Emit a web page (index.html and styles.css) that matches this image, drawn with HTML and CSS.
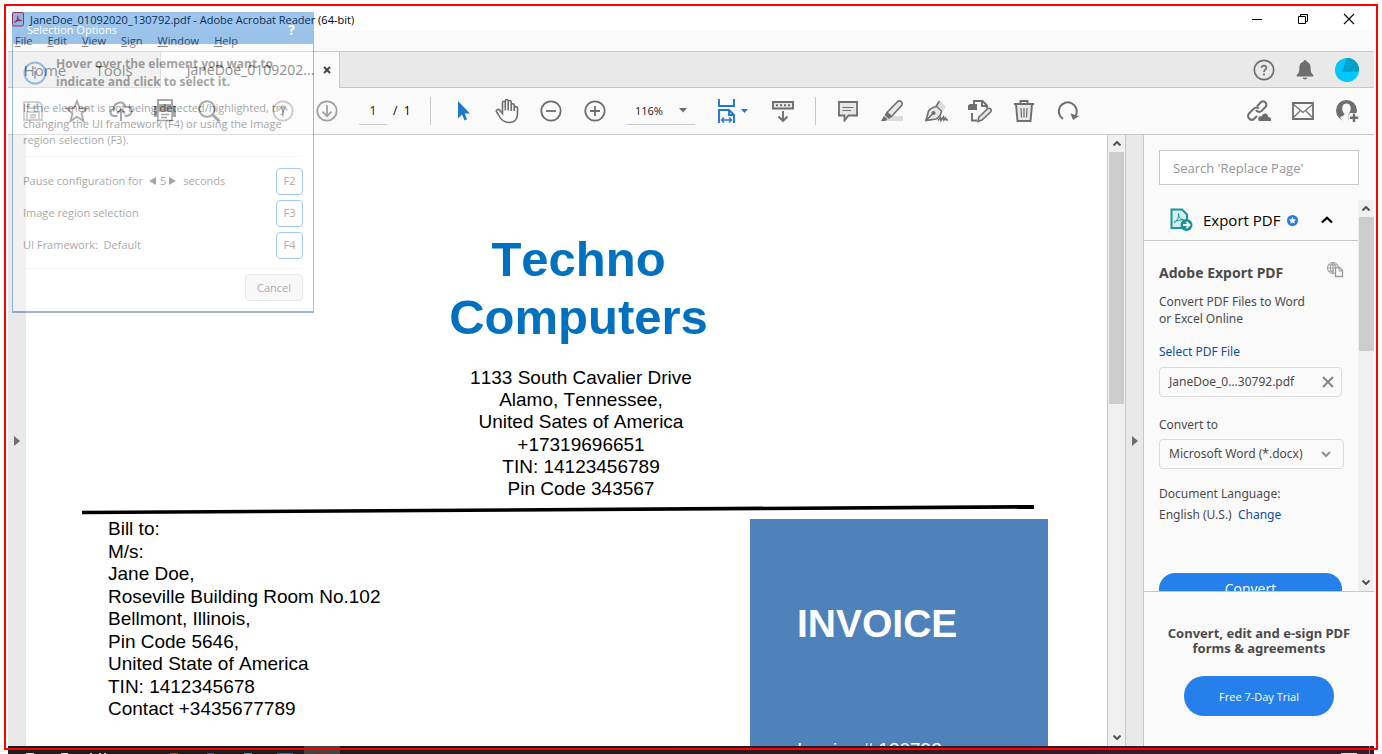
FILE: index.html
```html
<!DOCTYPE html>
<html lang="en">
<head>
<meta charset="utf-8">
<title>JaneDoe_01092020_130792.pdf - Adobe Acrobat Reader (64-bit)</title>
<link rel="stylesheet" href="styles.css">
</head>
<body>
<div class="screen">
  <header class="titlebar">
    <svg class="app-icon" width="12" height="15" viewBox="0 0 12 15"><rect x="0.5" y="0.5" width="11" height="13.5" rx="1.5" fill="#f6dfe2" stroke="#e0172c"/><path d="M2.500 10.500C5 9 6 6 5.700 3.800 5.300 6.500 7.500 8.800 9.700 8.600 7 8 4 9 2.500 10.500Z" fill="none" stroke="#e0132b" stroke-width="1.100"/></svg>
    <h1 class="title">JaneDoe_01092020_130792.pdf - Adobe Acrobat Reader (64-bit)</h1>
    <div class="window-buttons">
      <button aria-label="Minimize"><svg width="12" height="12" viewBox="0 0 12 12"><path d="M1 6.500H11" stroke="#000"/></svg></button>
      <button aria-label="Restore"><svg width="12" height="12" viewBox="0 0 12 12"><path d="M1.500 3.500H8.500V10.500H1.500ZM3.500 3.500V1.500H10.500V8.500H8.500" fill="none" stroke="#000"/></svg></button>
      <button aria-label="Close"><svg width="12" height="12" viewBox="0 0 12 12"><path d="M1 1L11 11M11 1L1 11" stroke="#000" stroke-width="1.100"/></svg></button>
    </div>
  </header>

  <nav class="menubar">
    <button><u>F</u>ile</button><button><u>E</u>dit</button><button><u>V</u>iew</button><button><u>S</u>ign</button><button><u>W</u>indow</button><button><u>H</u>elp</button>
  </nav>

  <div class="tabbar">
    <button class="tab tab-home">Home</button>
    <button class="tab tab-tools">Tools</button>
    <div class="tab-active">
      <button class="tab">JaneDoe_0109202...</button>
      <button class="tab-close" aria-label="Close tab"><svg width="8" height="8" viewBox="0 0 8 8"><path d="M1 1L7 7M7 1L1 7" stroke="#444" stroke-width="2"/></svg></button>
    </div>
    <div class="account">
      <button aria-label="Help"><svg width="22" height="22" viewBox="0 0 22 22" fill="none" stroke="#6e6e6e"><circle cx="11" cy="11" r="9.700" stroke-width="1.700"/><path d="M8.500 8.800C8.500 5.800 13.500 5.900 13.300 8.900 13.200 10.700 11 10.700 11 13" stroke-width="1.700"/><path d="M11 14.500V16.300" stroke-width="2"/></svg></button>
      <button aria-label="Notifications"><svg width="20" height="22" viewBox="0 0 20 22" fill="#6e6e6e"><path d="M10 1C11.200 1 11.600 2 11.500 2.800 14.800 3.600 15.600 6 15.600 9 15.600 13 16.500 14.500 18.300 16V17.500H1.700V16C3.500 14.500 4.400 13 4.400 9 4.400 6 5.200 3.600 8.500 2.800 8.400 2 8.800 1 10 1ZM7.500 18.700H12.500C12 21 8 21 7.500 18.700Z"/></svg></button>
      <button aria-label="Profile"><svg width="24" height="24" viewBox="0 0 24 24"><circle cx="12" cy="12" r="12" fill="#00c8ff"/><path d="M12 0A12 12 0 0 1 24 13.500L7 14Z" fill="#00a0c8"/></svg></button>
    </div>
  </div>

  <div class="toolbar">
    <button class="tool" aria-label="Save"><svg width="22" height="22" viewBox="0 0 22 22" fill="none" stroke="#b0b0b0" stroke-width="1.800"><path d="M2 2H17L20 5V20H2ZM6 2V8H15V2M5 20V12H17V20M8 15H14M8 17.500H14"/></svg></button>
    <button class="tool" aria-label="Star"><svg width="24" height="24" viewBox="0 0 24 24" fill="none" stroke="#6e6e6e" stroke-width="1.700"><path d="M12 2L14.800 9.200 22.300 9.600 16.500 14.400 18.500 22 12 17.700 5.500 22 7.500 14.400 1.700 9.600 9.200 9.200Z"/></svg></button>
    <button class="tool" aria-label="Upload"><svg width="24" height="24" viewBox="0 0 24 24" fill="none" stroke="#6e6e6e" stroke-width="2"><path d="M8.500 17H5C0.500 16.500 0.500 10.500 5 10 5 3 14.500 1 16.500 8 21 7 23.500 9.500 22.500 13 22 16 20 17 15.500 17M12 22V11M8 14.500L12 10.500 16 14.500"/></svg></button>
    <button class="tool" aria-label="Print"><svg width="24" height="24" viewBox="0 0 24 24"><path d="M5 1H19V6H5Z" fill="none" stroke="#6e6e6e" stroke-width="2"/><path d="M1 7H23V18H19V12H5V18H1Z" fill="#6e6e6e"/><path d="M5 12H19V21.500H5ZM8 15.500H16M8 18.500H14" fill="none" stroke="#6e6e6e" stroke-width="1.600"/></svg></button>
    <button class="tool" aria-label="Find"><svg width="24" height="24" viewBox="0 0 24 24" fill="none" stroke="#6e6e6e"><circle cx="10" cy="10" r="7.800" stroke-width="2"/><path d="M15.500 15.500L22.500 22.500" stroke-width="3"/></svg></button>
    <button class="tool tool-after-gap" aria-label="Previous page"><svg width="22" height="22" viewBox="0 0 22 22" fill="none" stroke="#a6a6a6" stroke-width="1.800"><circle cx="11" cy="11" r="9.700"/><path d="M11 17V6M6.500 10.300L11 5.800 15.500 10.300"/></svg></button>
    <button class="tool" aria-label="Next page"><svg width="22" height="22" viewBox="0 0 22 22" fill="none" stroke="#a0a0a0" stroke-width="1.800"><circle cx="11" cy="11" r="9.700"/><path d="M11 5V16M6.500 11.700L11 16.200 15.500 11.700"/></svg></button>
    <input class="page-number" type="text" value="1" aria-label="Page number">
    <span class="page-total">/&nbsp; 1</span>
    <span class="separator"></span>
    <button class="tool" aria-label="Select"><svg width="16" height="22" viewBox="0 0 16 22"><path d="M3 1V18.500L7 14.500 9.500 20.500 12 19.300 9.700 13.500H15Z" fill="#2078ce"/></svg></button>
    <button class="tool" aria-label="Pan"><svg width="24" height="26" viewBox="0 0 24 26" fill="none" stroke="#6e6e6e" stroke-width="1.600"><path d="M7.500 14V4.800C7.500 2.700 10.300 2.700 10.300 4.800V12.500 3C10.300 1 13.200 1 13.200 3V12.500 4C13.200 2 16.200 2 16.200 4V13 7.300C16.200 5.300 19.200 5.300 19.200 7.300V13 10.500C19.200 8 22.500 8 22.500 10.500V16C22.500 21.500 19 24.500 14 24.500 8 24.500 5.500 21 3.500 17L1.500 13.500C.7 12 3.300 10.500 4.700 12.200L7.500 15.500Z"/></svg></button>
    <button class="tool" aria-label="Zoom out"><svg width="22" height="22" viewBox="0 0 22 22" fill="none" stroke="#6e6e6e" stroke-width="1.800"><circle cx="11" cy="11" r="9.700"/><path d="M6 11H16"/></svg></button>
    <button class="tool" aria-label="Zoom in"><svg width="22" height="22" viewBox="0 0 22 22" fill="none" stroke="#6e6e6e" stroke-width="1.800"><circle cx="11" cy="11" r="9.700"/><path d="M6 11H16M11 6V16"/></svg></button>
    <span class="zoom-level">
      <select aria-label="Zoom level"><option>116%</option></select>
      <svg width="8" height="5" viewBox="0 0 8 5"><path d="M0 0H8L4 4.500Z" fill="#6e6e6e"/></svg>
    </span>
    <button class="tool tool-fit" aria-label="Fit width"><svg width="32" height="26" viewBox="0 0 32 26" fill="none" stroke="#2078ce" stroke-width="1.900"><path d="M2 1V8H17V1M2 25V12H12L17 17V25M12 12V17H17"/><path d="M4.500 22H14.500M7 19.500L4.500 22 7 24.500M12 19.500L14.500 22 12 24.500" stroke-width="1.300"/><path d="M24 11H31L27.500 15Z" fill="#2078ce" stroke="none"/></svg></button>
    <button class="tool" aria-label="Scroll mode"><svg width="24" height="24" viewBox="0 0 24 24" fill="none" stroke="#6e6e6e" stroke-width="1.900"><path d="M2 3H22V9.500H2Z" fill="#e8e8e8"/><path d="M5 6.300H19" stroke-dasharray="2 2"/><path d="M12 12V22M7.500 17.500L12 22 16.500 17.500"/></svg></button>
    <span class="separator separator-after-view"></span>
    <button class="tool" aria-label="Comment"><svg width="22" height="22" viewBox="0 0 22 22" fill="#e8e8e8" stroke="#6e6e6e" stroke-width="1.800"><path d="M2 2H20V15.500H11.500L7.500 20.500V15.500H2Z"/><path d="M5.500 7.500H16.500M5.500 10.500H14" stroke-width="1.200"/></svg></button>
    <button class="tool" aria-label="Highlight"><svg width="24" height="24" viewBox="0 0 24 24"><path d="M6 17H23V22H1Z" fill="#dcdcdc"/><path d="M7 13.500L18 2.200C20.500 1 23 3.500 22 6L11.500 17.500Z" fill="#e8e8e8" stroke="#6e6e6e" stroke-width="1.600"/><path d="M7 12.500L12 17.500 9 20 4.500 16ZM4 17L7.500 20 5.500 22H1Z" fill="#6e6e6e"/></svg></button>
    <button class="tool" aria-label="Fill and sign"><svg width="24" height="24" viewBox="0 0 24 24" fill="none" stroke="#6e6e6e" stroke-width="1.600"><path d="M2 21.500L4.500 12C7 8.500 10 8 13 7.500L17.500 12C17 16 15 18.500 12 20Z" fill="#e8e8e8"/><path d="M16 2L22 8 18.500 12 13 7Z" fill="#dcdcdc" stroke="none"/><path d="M12 7.500L15.500 2M2 21.500L9 14.500"/><circle cx="9.500" cy="14" r="1.300" fill="#6e6e6e"/><path d="M14 21.500L16.500 18.500 17 21.500 19.500 18 20 21 21.500 19 22.500 21H24"/></svg></button>
    <button class="tool" aria-label="Edit PDF"><svg width="26" height="24" viewBox="0 0 26 24"><path d="M7 5V2H15.500L20 6.500V9M15 2V7H20M5 14V21.500H10" fill="none" stroke="#6e6e6e" stroke-width="1.900"/><path d="M3 5H10V11H1V6.500Z" fill="#6e6e6e"/><path d="M12 18L21 9.500C23 8.500 25 10.500 24 12.500L15 21 11 22.500Z" fill="#e8e8e8" stroke="#6e6e6e" stroke-width="1.600"/></svg></button>
    <button class="tool" aria-label="Delete"><svg width="22" height="24" viewBox="0 0 22 24" fill="none" stroke="#6e6e6e" stroke-width="1.900"><path d="M3 5.500L4.500 22H17.500L19 5.500" fill="#e8e8e8"/><path d="M1 5H21M7.500 5V2H14.500V5"/><path d="M8 9L8.500 18.500M11 9V18.500M14 9L13.500 18.500" stroke-width="1.200"/></svg></button>
    <button class="tool" aria-label="Rotate"><svg width="24" height="24" viewBox="0 0 24 24"><path d="M7 20A9 9 0 1 1 20 16" fill="none" stroke="#6e6e6e" stroke-width="2"/><path d="M14.500 14.500L23 17 17 21Z" fill="#6e6e6e"/></svg></button>
    <div class="share">
      <button class="tool" aria-label="Share link"><svg width="26" height="24" viewBox="0 0 26 24"><g fill="none" stroke="#6e6e6e" stroke-width="2"><path d="M11 7.500L15 3C18 1 21.500 4 20 7.500L15.500 12C13.500 13.500 11 13 10 11"/><path d="M13 9.500C11 8 9 8.500 7.500 10L3 14.500C.5 18 4 22 7.500 20.500L11 17"/></g><path d="M13 22C11 18.500 13.500 16.500 15.500 17.500 17 13 22.500 14 22 18 25 18 25.500 20.500 25 22Z" fill="#6e6e6e"/></svg></button>
      <button class="tool" aria-label="Email"><svg width="22" height="18" viewBox="0 0 22 18" fill="none" stroke="#6e6e6e" stroke-width="1.800"><path d="M1 1H21V17H1Z"/><path d="M1 2L11 10.500 21 2M1 16L8 9M21 16L14 9" stroke-width="1.200"/></svg></button>
      <button class="tool" aria-label="Add people"><svg width="24" height="24" viewBox="0 0 24 24"><circle cx="11.500" cy="11.500" r="10.500" fill="#6e6e6e"/><path d="M5 18.500C6.500 17 9.500 17 9.500 15 6 11 6.500 4.500 11.500 4.500 16.500 4.500 17 11 13.500 15V23H11C8.500 22 6.500 20.500 5 18.500Z" fill="#fafafa"/><path d="M15 14H24V24H13.500V16Z" fill="#fafafa"/><path d="M19 14.500V23M14.800 18.700H23.200" stroke="#6e6e6e" stroke-width="2.400"/></svg></button>
    </div>
  </div>

  <main class="workspace">
    <button class="strip" aria-label="Show navigation pane"><svg width="6" height="10" viewBox="0 0 6 10"><path d="M0 0L6 5 0 10Z" fill="#6e6e6e"/></svg></button>

    <article class="document">
      <h2 class="company">Techno<br>Computers</h2>
      <div class="lines company-address">
        <span>1133 South Cavalier Drive</span><span>Alamo, Tennessee,</span><span>United Sates of America</span><span>+17319696651</span><span>TIN: 14123456789</span><span>Pin Code 343567</span>
      </div>
      <svg class="rule" viewBox="0 0 952 18" preserveAspectRatio="none"><path d="M0 10.700L952 5V8.700L0 14.200Z" fill="#000"/></svg>
      <div class="billing">
        <div class="lines bill-to">
          <span>Bill to:</span><span>M/s:</span><span>Jane Doe,</span><span>Roseville Building Room No.102</span><span>Bellmont, Illinois,</span><span>Pin Code 5646,</span><span>United State of America</span><span>TIN: 1412345678</span><span>Contact +3435677789</span>
        </div>
        <section class="invoice">
          <h3>INVOICE</h3>
          <p>Invoice # 130792</p>
        </section>
      </div>
    </article>

    <div class="scrollbar scrollbar-document">
      <svg width="8" height="5" viewBox="0 0 8 5"><path d="M.5 4.500L4 1 7.500 4.500" fill="none" stroke="#505050" stroke-width="2"/></svg>
      <div class="thumb thumb-document"></div>
      <svg class="arrow-down" width="8" height="5" viewBox="0 0 8 5"><path d="M.5 .5L4 4 7.500 .5" fill="none" stroke="#505050" stroke-width="2"/></svg>
    </div>
    <button class="strip strip-right" aria-label="Hide tools pane"><svg width="6" height="10" viewBox="0 0 6 10"><path d="M0 0L6 5 0 10Z" fill="#6e6e6e"/></svg></button>

    <aside class="panel">
      <div class="search"><input type="text" placeholder="Search 'Replace Page'" aria-label="Search tools"></div>
      <div class="panel-scroll">
        <div class="panel-content">
          <div class="export-header">
            <svg width="23" height="24" viewBox="0 0 23 24"><path d="M1.500 1.500H12L17 6.500V20H1.500Z" fill="#d5efec" stroke="#1b9494" stroke-width="2"/><path d="M4 14.500C7.500 13 9 9 8.500 5.500 8.500 9.500 11 12 14 12 10 11.500 6.500 12.500 4 14.500Z" fill="none" stroke="#1b9494"/><circle cx="16.500" cy="17" r="6" fill="#1b9494"/><path d="M13 17H19M16.500 14L19.500 17 16.500 20" fill="none" stroke="#fff" stroke-width="1.800"/></svg>
            <h2>Export PDF</h2>
            <svg width="11" height="11" viewBox="0 0 11 11"><circle cx="5.500" cy="5.500" r="5.500" fill="#1f7be8"/><path d="M5.500 1.800L6.600 4.200 9.200 4.500 7.300 6.200 7.800 8.800 5.500 7.500 3.200 8.800 3.700 6.200 1.800 4.500 4.400 4.200Z" fill="#fff"/></svg>
            <button class="collapse" aria-label="Collapse"><svg width="12" height="8" viewBox="0 0 12 8"><path d="M1 6.500L6 1.800 11 6.500" fill="none" stroke="#000" stroke-width="2.200"/></svg></button>
          </div>
          <div class="export-body">
            <div class="export-title">
              <h3>Adobe Export PDF</h3>
              <svg width="17" height="16" viewBox="0 0 17 16" fill="none" stroke="#9a9a9a"><circle cx="6" cy="6" r="5.500"/><path d="M.5 6H8M6 .5V11M1.500 3H10.500M1.500 9H7M6 .5C2.500 3 2.500 9 6 11.500M6 .5C8 2 8.500 4 8.500 5"/><path d="M8.500 5.500H12.500L15.500 8.500V14.500H8.500Z" fill="#fafafa" stroke-width="1.300"/><path d="M12 5.500V9H15.500"/></svg>
            </div>
            <p class="lead">Convert PDF Files to Word<br>or Excel Online</p>
            <a class="select-file" href="#">Select PDF File</a>
            <div class="file-box"><span>JaneDoe_0...30792.pdf</span><button aria-label="Remove file"><svg width="12" height="12" viewBox="0 0 12 12"><path d="M1 1L11 11M11 1L1 11" stroke="#858585" stroke-width="2"/></svg></button></div>
            <label class="format-label" for="format">Convert to</label>
            <div class="format-box">
              <select id="format"><option>Microsoft Word (*.docx)</option></select>
              <svg width="10" height="7" viewBox="0 0 10 7"><path d="M1 1L5 5 9 1" fill="none" stroke="#8e8e8e" stroke-width="2"/></svg>
            </div>
            <p class="language">Document Language:<br>English (U.S.)&nbsp; <a href="#">Change</a></p>
            <button class="convert">Convert</button>
          </div>
        </div>
        <div class="scrollbar scrollbar-panel">
          <svg width="8" height="5" viewBox="0 0 8 5"><path d="M.5 4.500L4 1 7.500 4.500" fill="none" stroke="#505050" stroke-width="2"/></svg>
          <div class="thumb thumb-panel"></div>
          <svg class="arrow-down" width="8" height="5" viewBox="0 0 8 5"><path d="M.5 .5L4 4 7.500 .5" fill="none" stroke="#505050" stroke-width="2"/></svg>
        </div>
      </div>
      <footer class="promo">
        <p>Convert, edit and e-sign PDF<br>forms &amp; agreements</p>
        <button class="trial">Free 7-Day Trial</button>
      </footer>
    </aside>
  </main>

  <svg class="taskbar" viewBox="0 0 1366 8" preserveAspectRatio="none">
    <defs><linearGradient id="bar"><stop offset="0.450" stop-color="#1e1c1c"/><stop offset="0.800" stop-color="#33192a"/></linearGradient></defs>
    <rect width="1366" height="8" fill="url(#bar)"/>
    <rect x="296" width="36" height="8" fill="#444242"/>
    <path d="M18 7.500H26M53 7.500H60M82 7.500H84M91 7.500H93M96 7.500H98M1333 7.500H1349" stroke="#ddd"/>
    <path d="M162 7.500H170" stroke="#b5443e"/><path d="M199 7.500H206" stroke="#5a52b8"/><path d="M236 7.500H244" stroke="#2fa5a5"/><path d="M269 7.500H285" stroke="#2474c4"/><path d="M307 7.500H321" stroke="#a3161a"/>
    <path d="M1361.500 0V8" stroke="#8a7a84"/>
  </svg>
</div>

<section class="dialog" aria-label="Selection Options">
  <header class="dialog-header"><h2>Selection Options</h2><button aria-label="Help">?</button></header>
  <div class="dialog-body">
    <div class="hint">
      <svg width="24" height="24" viewBox="0 0 24 24"><circle cx="12" cy="12" r="10.500" fill="none" stroke="#1b76d8" stroke-width="2"/><path d="M12 6V8M12 10V18" stroke="#1b76d8" stroke-width="2"/></svg>
      <strong>Hover over the element you want to indicate and click to select it.</strong>
    </div>
    <p class="help">If the element is not being detected/highlighted, try changing the UI framework (F4) or using the Image region selection (F3).</p>
    <div class="options">
      <div class="option"><span>Pause configuration for</span><button class="step" aria-label="Fewer seconds"><svg width="7" height="8" viewBox="0 0 7 8"><path d="M7 0V8L0 4Z" fill="#222"/></svg></button><span>5</span><button class="step step-up" aria-label="More seconds"><svg width="7" height="8" viewBox="0 0 7 8"><path d="M0 0V8L7 4Z" fill="#222"/></svg></button><span>seconds</span><button class="key">F2</button></div>
      <div class="option"><span>Image region selection</span><button class="key">F3</button></div>
      <div class="option"><span>UI Framework:&nbsp; Default</span><button class="key">F4</button></div>
    </div>
    <div class="actions"><button class="cancel">Cancel</button></div>
  </div>
</section>
<div class="capture-frame"></div>
</body>
</html>
```
FILE: styles.css
```css
* { box-sizing: border-box; }
body { margin: 0; background: #fff; color: #222; font: 12px/16px "Open Sans", "Noto Sans", sans-serif; overflow: hidden; }
h1, h2, h3, p { margin: 0; font-weight: 400; }
button, input, select { font: inherit; color: inherit; margin: 0; padding: 0; border: 0; background: none; border-radius: 0; outline: 0; }
button { display: flex; align-items: center; justify-content: center; }
select { appearance: none; }
svg { display: block; flex: none; }
a { text-decoration: none; color: #0d4f9e; }

.screen { height: 100vh; padding: 7px 8px 0; display: flex; flex-direction: column; }
.capture-frame { position: absolute; inset: 4px; border: 2px solid #f00; pointer-events: none; }

.titlebar { flex: none; height: 24px; display: flex; align-items: center; gap: 6px; padding-left: 4px; }
.title { padding-top: 2px; font-size: 11px; color: #000; white-space: nowrap; }
.window-buttons { margin-left: auto; padding-right: 2px; display: flex; }
.window-buttons button { width: 46px; height: 24px; }

.menubar { flex: none; height: 20px; display: flex; align-items: center; gap: 15px; padding-left: 7px; background: #fafafa; font-size: 11px; }
.menubar button { display: block; color: #333; }

.tabbar { flex: none; height: 37px; display: flex; background: #e9e9e9; border: 1px solid #c8c8c8; border-width: 1px 0; font-size: 14px; color: #444; }
.tab { height: 35px; color: #444; }
.tab-home { width: 74px; font-size: 15px; }
.tab-tools { width: 64px; margin-right: 14px; font-size: 15px; }
.tab-active { display: flex; align-items: center; width: 180px; padding: 0 9px 0 28px; gap: 11px; background: #fafafa; border: 1px solid #c8c8c8; border-width: 0 1px; margin-bottom: -1px; }
.tab-active .tab { width: 123px; }
.account { margin-left: auto; padding-right: 15px; display: flex; align-items: center; gap: 20px; }

.toolbar { flex: none; height: 47px; display: flex; align-items: center; padding-left: 3px; background: #fafafa; border-bottom: 1px solid #c8c8c8; }
.tool { flex: none; width: 44px; height: 44px; }
.tool-after-gap { margin-left: 30px; }
.page-number { width: 28px; height: 27px; margin-left: 10px; text-align: center; border-bottom: 1px solid #c8c8c8; }
.page-total { margin-left: 6px; width: 18px; white-space: nowrap; color: #000; }
.separator { width: 1px; height: 28px; margin: 0 10px 0 19px; background: #c8c8c8; }
.separator-after-view { margin-left: 10px; }
.zoom-level { display: flex; align-items: center; width: 68px; height: 27px; margin: 0 10px; padding: 0 8px; border-bottom: 1px solid #c8c8c8; font-size: 11px; }
.zoom-level select { flex: 1; min-width: 0; }
.tool-fit { margin: 0 6px; }
.share { margin-left: auto; padding-right: 5px; display: flex; }

.workspace { flex: 1; min-height: 0; display: flex; }
.strip { flex: none; width: 18px; height: auto; background: #e9e9e9; }
.strip-right { width: 19px; border: 1px solid #c8c8c8; border-width: 0 1px; }

.document { flex: 1; min-width: 0; overflow: hidden; padding-top: 95px; display: flex; flex-direction: column; background: #fff; color: #000; font: 19px/22px "Liberation Sans", Arial, sans-serif; font-kerning: none; }
.company { padding-left: 24px; text-align: center; font-size: 49px; line-height: 58px; font-weight: 700; color: #0070c0; }
.lines { display: flex; flex-direction: column; justify-content: space-between; white-space: nowrap; }
.company-address { flex: none; height: 133px; margin-top: 21px; padding-left: 29px; align-items: center; }
.rule { height: 18px; width: auto; margin: 0 73px 0 56px; }
.billing { flex: 1; min-height: 0; display: flex; justify-content: space-between; align-items: flex-start; padding: 0 59px 0 82px; }
.bill-to { height: 202px; }
.invoice { width: 298px; height: 260px; margin-top: 1px; padding: 83px 0 0 47px; background: #4f81bb; color: #fff; font-weight: 700; }
.invoice h3 { font-size: 39px; line-height: 44px; font-weight: 700; }
.invoice p { margin-top: 93px; font-size: 19px; }

.scrollbar { flex: none; display: flex; flex-direction: column; align-items: center; background: #f0f0f0; padding: 6px 0; gap: 6px; }
.scrollbar-document { width: 18px; border-left: 1px solid #c8c8c8; }
.scrollbar-panel { width: 16px; }
.thumb { width: 15px; background: #cdcdcd; }
.thumb-document { height: 252px; }
.thumb-panel { height: 134px; }
.arrow-down { margin-top: auto; }

.panel { flex: none; width: 230px; background: #fafafa; display: flex; flex-direction: column; color: #4b4b4b; }
.search { padding: 15px; }
.search input { display: block; width: 100%; height: 35px; padding: 0 13px; background: #fff; border: 1px solid #c8c8c8; font-size: 13px; }
.search input::placeholder { color: #959595; }
.panel-scroll { flex: 1; min-height: 0; display: flex; border-bottom: 1px solid #c8c8c8; }
.panel-content { flex: 1; min-width: 0; overflow: hidden; }
.export-header { height: 41px; display: flex; align-items: center; padding-left: 26px; gap: 7px; border-bottom: 1px solid #c8c8c8; color: #000; }
.export-header h2 { font-size: 15px; line-height: 20px; margin-left: 3px; }
.collapse { margin: 0 25px 0 auto; }
.export-body { padding: 21px 14px 0 15px; font-family: "Noto Sans", "Open Sans", sans-serif; }
.export-title { display: flex; justify-content: space-between; line-height: 22px; }
.export-title h3 { font-size: 14px; font-weight: 700; }
.lead { margin-top: 9px; line-height: 17px; }
.select-file { display: block; margin-top: 16px; line-height: 17px; }
.file-box { height: 30px; width: 183px; margin-top: 7px; padding: 0 7px 0 9px; display: flex; align-items: center; justify-content: space-between; border: 1px solid #dcdcdc; border-radius: 4px; }
.format-label { display: block; margin-top: 19px; line-height: 17px; }
.format-box { height: 30px; margin: 6px 0 0; padding: 0 12px 0 9px; display: flex; align-items: center; border: 1px solid #dcdcdc; border-radius: 4px; }
.format-box select { flex: 1; min-width: 0; }
.language { margin-top: 14px; line-height: 21px; }
.convert { width: 183px; height: 32px; margin-top: 48px; border-radius: 16px; background: #2680eb; color: #fff; font-family: "Open Sans", sans-serif; font-size: 14px; }
.promo { height: 154px; display: flex; flex-direction: column; align-items: center; padding-top: 34px; text-align: center; font-size: 13px; line-height: 15px; }
.promo p { font-family: "Noto Sans", "Open Sans", sans-serif; font-weight: 700; }
.trial { width: 150px; height: 40px; margin-top: 20px; border-radius: 20px; background: #2680eb; color: #fff; font-size: 11px; }

.taskbar { width: 100%; height: 8px; }

.dialog { position: absolute; left: 12px; top: 12px; width: 302px; opacity: 0.4; background: #fff; border: 1px solid #0a64c0; border-bottom: 2px solid #0a4a90; font-size: 11px; }
.dialog-header { height: 31px; display: flex; align-items: center; justify-content: space-between; padding: 2px 18px 0 14px; background: #0f6fce; color: #fff; }
.dialog-header h2 { font-size: 11px; }
.dialog-header button { font-size: 14px; font-weight: 700; }
.dialog-body { padding: 11px 10px 10px; }
.hint { display: flex; align-items: center; gap: 9px; font-size: 12px; line-height: 18px; }
.hint strong { flex: 1; font-weight: 700; }
.help { margin-top: 9px; }
.options { margin-top: 8px; padding: 8px 0 7px; border: 1px solid #eee; border-width: 1px 0; }
.option { height: 32px; display: flex; align-items: center; }
.step { margin: 0 4px 0 6px; }
.step-up { margin: 0 7px 0 3px; }
.key { margin-left: auto; width: 27px; height: 27px; border: 1px solid #1b7ee0; border-radius: 4px; }
.actions { display: flex; justify-content: flex-end; padding-top: 5px; }
.cancel { width: 58px; height: 27px; background: #eee; border: 1px solid #ccc; border-radius: 4px; }
```
